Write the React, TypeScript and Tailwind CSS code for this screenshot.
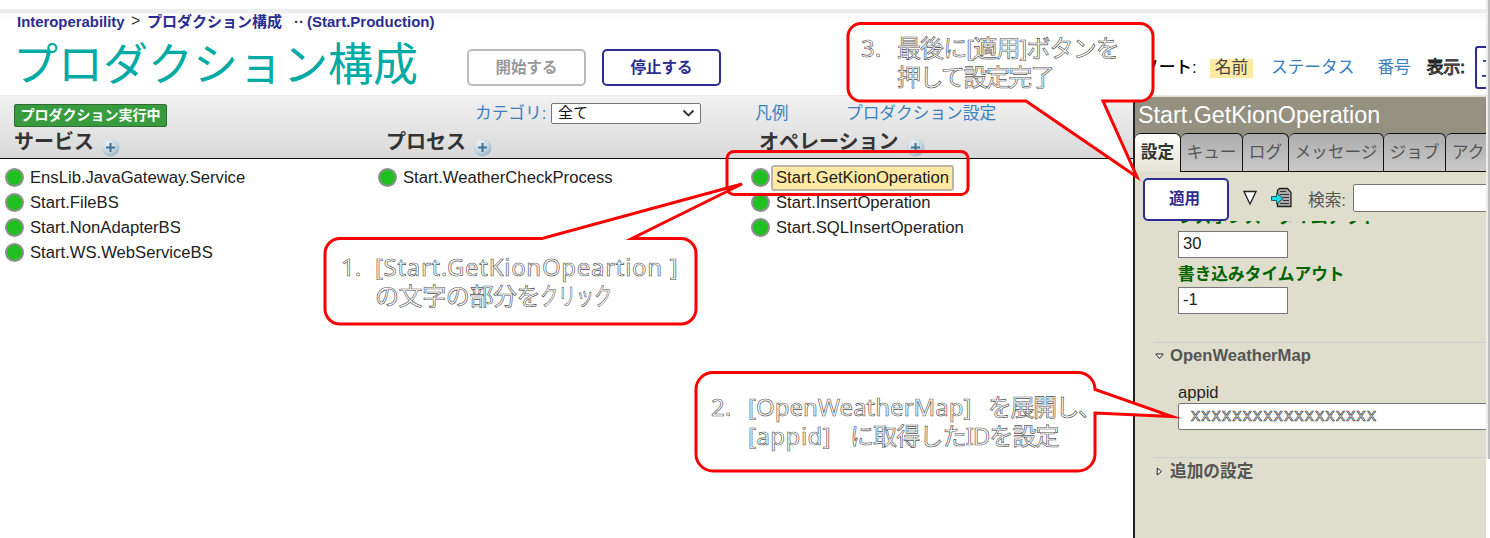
import type { ReactNode } from "react";

const services = ["EnsLib.JavaGateway.Service", "Start.FileBS", "Start.NonAdapterBS", "Start.WS.WebServiceBS"];
const processes = ["Start.WeatherCheckProcess"];
const operations = ["Start.GetKionOperation", "Start.InsertOperation", "Start.SQLInsertOperation"];

function AddIcon() {
  return (
    <svg width="19" height="19" viewBox="0 0 19 19" className="mt-[11px] shrink-0">
      <defs>
        <radialGradient id="orb" cx="35%" cy="25%" r="80%">
          <stop offset="0" stopColor="#e9eef1" />
          <stop offset="0.6" stopColor="#c6d7e0" />
          <stop offset="1" stopColor="#94b4c5" />
        </radialGradient>
      </defs>
      <circle cx="9.5" cy="9.5" r="9" fill="url(#orb)" />
      <path d="M9.5 5v9M5 9.5h9" stroke="#3f7297" strokeWidth="2" />
    </svg>
  );
}

function Heading({ children, className }: { children: ReactNode; className: string }) {
  return (
    <div className={`flex h-[30px] ${className}`}>
      <span className="text-[20px] leading-[31px] font-bold whitespace-nowrap text-[#333]">{children}</span>
      <span className="ml-[7px]"><AddIcon /></span>
    </div>
  );
}

function Items({ items, selected, className }: { items: string[]; selected?: string; className: string }) {
  return (
    <ul className={`pt-[6px] ${className}`}>
      {items.map((name) => (
        <li key={name} className="flex h-[25px] items-center pl-[5px]">
          <span className="size-[19px] shrink-0 rounded-full border-2 border-[#8d918d] bg-[#21c021]" />
          <span
            className={
              name === selected
                ? "ml-px flex h-[26px] items-center rounded-[3px] border-2 border-[#b9b6a5] bg-[#ffe9a3] pt-[2px] pr-[3px] pl-[3px] text-[16.65px] whitespace-nowrap text-[#222]"
                : "mt-[2px] ml-[6px] text-[16.65px] whitespace-nowrap text-[#222]"
            }
          >
            {name}
          </span>
        </li>
      ))}
    </ul>
  );
}

function Tab({ label, className }: { label: string; className: string }) {
  return (
    <div
      className={`flex h-[39px] shrink-0 items-center justify-center overflow-hidden rounded-t-[6px] border border-l-0 border-[#111] bg-linear-to-b from-[#adadad] to-[#c9c9c9] text-[16.7px] whitespace-nowrap text-[#555] ${className}`}
    >
      {label}
    </div>
  );
}

const note =
  "absolute z-20 whitespace-pre text-white text-[24px] leading-[29px] [-webkit-text-stroke:0.65px_#555] [font-family:'Noto_Sans','Noto_Sans_CJK_JP',sans-serif]";

export default function App() {
  return (
    <div className="relative flex h-[538px] w-[1490px] overflow-hidden bg-white [font-family:'Liberation_Sans','Noto_Sans_CJK_JP',sans-serif]">
      <div className="flex w-[1486px] shrink-0 flex-col overflow-hidden">
        <div className="mt-[9px] h-[4px] shrink-0 bg-[#ededed]" />
        <header className="h-[83px] shrink-0 border-b border-[#e8e8e8] bg-linear-to-b from-[#f7f7f7] to-white to-[8px]">
          <nav className="flex h-[18px] items-center pl-[17px] text-[15px] font-bold whitespace-nowrap text-[#2c2c92]">
            <span className="w-[107px] text-[14.9px]">Interoperability</span>
            <span className="-mt-[3px] ml-[7px] w-[16px] text-[16px] font-normal text-[#333]">&gt;</span>
            <span className="w-[147px]">プロダクション構成</span>
            <span className="w-[12px] text-[#333]">··</span>
            <span className="ml-px text-[15px]">(Start.Production)</span>
          </nav>
          <div className="flex pl-[13px]">
            <h1 className="h-[64px] w-[454px] shrink-0 text-[45px] leading-[69px] whitespace-nowrap text-[#00aaa5]">プロダクション構成</h1>
            <button className="mt-[18px] flex h-[37px] w-[119px] shrink-0 items-center justify-center rounded-[5px] border-2 border-[#bbb] text-[15.5px] font-bold text-[#999]">開始する</button>
            <button className="mt-[18px] ml-[16px] flex h-[37px] w-[119px] shrink-0 items-center justify-center rounded-[5px] border-2 border-[#2c2c92] text-[15.5px] font-bold text-[#2c2c92]">停止する</button>
            <div className="mt-[25px] ml-[421px] flex h-[24px] shrink-0 items-center text-[16.7px] whitespace-nowrap">
              <span className="w-[68px] font-medium text-black">ソート:</span>
              <span className="flex h-[19px] w-[43px] items-center justify-center bg-[#ffe9a3] text-[#444]">名前</span>
              <span className="ml-[18px] text-[#3a80bd]">ステータス</span>
              <span className="ml-[23px] text-[#3a80bd]">番号</span>
              <span className="ml-[16px] text-white [-webkit-text-stroke:1px_#222]">表示:</span>
            </div>
            <div className="mt-[15px] ml-[10px] h-[43px] w-[40px] shrink-0 rounded-[3px] border-2 border-[#2c2c92] pt-[4px] pl-[4px] text-[22px] text-[#2c2c92]">工</div>
          </div>
        </header>
        <div className="flex h-[442px]">
          <main className="w-[1133px] shrink-0">
            <div className="h-[63px] border-b border-[#111] bg-linear-to-b from-[#f1f1f1] to-[#d9d9d9]">
              <div className="flex h-[31px] items-start text-[16.7px] whitespace-nowrap text-[#3a80bd]">
                <div className="mt-[8px] ml-[14px] flex h-[23px] w-[153px] items-center justify-center rounded-[2px] border border-[#2f6b32] bg-[#389c3e] text-[14px] font-bold text-white">プロダクション実行中</div>
                <span className="mt-[5px] ml-[308px] w-[76px]">カテゴリ:</span>
                <div className="mt-[7px] flex h-[21px] w-[150px] items-center justify-between rounded-[2px] border border-[#777] bg-white pr-[5px] pl-[6px] text-[15px] text-[#111]">
                  全て
                  <svg width="13" height="9" viewBox="0 0 13 9" fill="none" stroke="#333" strokeWidth="1.8"><path d="M1.5 1.5l5 5 5-5" /></svg>
                </div>
                <span className="mt-[5px] ml-[54px] w-[91px]">凡例</span>
                <span className="mt-[5px]">プロダクション設定</span>
              </div>
              <div className="flex pl-[14px]">
                <Heading className="w-[372px]">サービス</Heading>
                <Heading className="w-[373px]">プロセス</Heading>
                <Heading className="w-[300px]">オペレーション</Heading>
              </div>
            </div>
            <div className="flex">
              <Items items={services} className="w-[373px]" />
              <Items items={processes} className="w-[373px]" />
              <Items items={operations} selected="Start.GetKionOperation" className="w-[300px]" />
            </div>
          </main>
          <aside className="flex w-[353px] shrink-0 flex-col overflow-hidden border-l-2 border-[#222] bg-[#dfdecd]">
            <div className="mt-px h-[36px] shrink-0 bg-[#949181] pl-[3px] text-[23.3px] leading-[37px] whitespace-nowrap text-white">Start.GetKionOperation</div>
            <div className="flex shrink-0 bg-[#949181]">
              <div className="flex h-[39px] w-[46px] shrink-0 items-center justify-center rounded-t-[6px] border-t border-r border-[#111] bg-linear-to-b from-white to-[#e4e3d3] text-[16.7px] font-bold text-[#333]">設定</div>
              <Tab label="キュー" className="w-[62px]" />
              <Tab label="ログ" className="w-[46px]" />
              <Tab label="メッセージ" className="w-[95px]" />
              <Tab label="ジョブ" className="w-[62px]" />
              <Tab label="アク" className="w-[60px] justify-start pl-[6px]" />
            </div>
            <div className="flex h-[49px] shrink-0 pl-[8px]">
              <button className="mt-[6px] flex h-[43px] w-[86px] shrink-0 items-center justify-center rounded-[5px] border-2 border-[#2c2c92] bg-white pr-[3px] pb-[2px] text-[15.5px] font-bold text-[#2c2c92]">適用</button>
              <svg className="mt-[18px] ml-[14px] shrink-0" width="14" height="16" viewBox="0 0 14 16"><path d="M1 1.5h12L7 14z" fill="white" stroke="#222" strokeWidth="1.3" /></svg>
              <svg className="mt-[15px] ml-[14px] shrink-0" width="21" height="21" viewBox="0 0 21 21">
                <path d="M6.500 3.500l2-2h8l3.500 4v14H6.500z" fill="#aaa" stroke="#222" strokeWidth="1.3" />
                <path d="M9 4.500h6M9 7.500h9M12 10.500h6M12 13.500h6M9 16.500h9" stroke="#333" strokeWidth="1" />
                <path d="M.5 9.500h5V6l6.500 5.500L5.500 17v-3.500h-5z" fill="#16dce8" stroke="#234" strokeWidth="0.8" />
              </svg>
              <span className="mt-[16px] ml-[16px] w-[45px] shrink-0 text-[16.7px] whitespace-nowrap text-[#555]">検索:</span>
              <div className="mt-[12px] h-[28px] w-[150px] shrink-0 rounded-[2px] border border-[#777] bg-white" />
            </div>
            <div className="min-h-0 flex-1 overflow-hidden pl-[43px] text-[16.6px] text-[#222]">
              <div className="h-[10px] overflow-hidden">
                <div className="-mt-[15px] text-[16.7px] leading-[24px] font-bold whitespace-nowrap text-[#006400]">レスポンス・タイムアウト</div>
              </div>
              <div className="flex h-[27px] w-[110px] items-center border border-[#777] bg-white pl-[4px]">30</div>
              <div className="h-[29px] text-[16.7px] leading-[33px] font-bold whitespace-nowrap text-[#006400]">書き込みタイムアウト</div>
              <div className="flex h-[27px] w-[110px] items-center border border-[#777] bg-white pl-[4px]">-1</div>
              <div className="mt-[28px] -ml-[25px] h-[115px] border-t border-[#cbd0cd]">
                <div className="flex h-[27px] items-center pl-[2px] font-bold text-[#555]">
                  <svg className="mr-[6px]" width="9" height="7" viewBox="0 0 9 7"><path d="M.8 1h7.4L4.5 5.5z" fill="white" stroke="#222" /></svg>
                  OpenWeatherMap
                </div>
                <div className="pl-[25px]">
                  <div className="mt-[10px] h-[22px] leading-[25px]">appid</div>
                  <div className="mt-px flex h-[27px] w-[340px] items-center rounded-[2px] border border-[#777] bg-white pb-[2px] pl-[12px] text-[18px] tracking-[1.35px] text-white [-webkit-text-stroke:0.65px_#333]">xxxxxxxxxxxxxxxxxx</div>
                </div>
              </div>
              <div className="-ml-[25px] border-t border-[#cbd0cd]">
                <div className="flex h-[27px] items-center pl-[2px] text-[16.7px] font-bold text-[#555]">
                  <svg className="mr-[6px]" width="9" height="9" viewBox="0 0 9 9"><path d="M2.2 1v7L6.5 4.5z" fill="white" stroke="#222" /></svg>
                  追加の設定
                </div>
              </div>
            </div>
          </aside>
        </div>
      </div>
      <div className="h-[459px] w-[4px] border-l-2 border-l-[#ececec] bg-[#bdbdbd]" />

      <svg className="absolute inset-0 z-10" width="1490" height="538" viewBox="0 0 1490 538" fill="white" stroke="#fb0000" strokeWidth="3" strokeMiterlimit="10">
        <rect x="727" y="151.5" width="241" height="43" rx="7" fill="none" />
        <path d="M340 238.500H542L742 184 632 238.500H681a15 15 0 0 1 15 15V309a15 15 0 0 1-15 15H340a15 15 0 0 1-15-15V253.500a15 15 0 0 1 15-15z" />
        <path d="M713 372.500H1078a17 17 0 0 1 17 17L1172 416.500 1095 413V454a17 17 0 0 1-17 17H713a17 17 0 0 1-17-17V389.500a17 17 0 0 1 17-17z" />
        <path d="M861 23.500H1140a13 13 0 0 1 13 13V88a13 13 0 0 1-13 13H1103L1137 177 1026 101H861a13 13 0 0 1-13-13V36.500a13 13 0 0 1 13-13z" />
      </svg>
      <div className={`${note} top-[252px] left-[341px]`}>1.</div>
      <div className={`${note} top-[252px] left-[375px]`}>
        <div className="tracking-[0.7px]">[Start.GetKionOpeartion ]</div>
        <div className="flex">
          <span className="w-[165px] tracking-[-0.4px]">の文字の部分を</span>
          <span className="w-[74px] origin-left scale-x-75">クリック</span>
        </div>
      </div>
      <div className={`${note} top-[392px] left-[711px]`}>2.</div>
      <div className={`${note} top-[392px] left-[748px]`}>
        <div className="flex">
          <span className="w-[240px]">[OpenWeatherMap]</span>
          <span className="tracking-[-1.5px]">を展開し、</span>
        </div>
        <div className="flex">
          <span className="w-[102px] tracking-[0.5px]">[appid]</span>
          <span className="tracking-[-0.9px]">に取得したIDを設定</span>
        </div>
      </div>
      <div className={`${note} top-[33px] left-[861px]`}>3.</div>
      <div className={`${note} top-[33px] left-[897px]`}>
        <div className="tracking-[-0.9px]">最後に[適用]ボタンを</div>
        <div className="tracking-[-1.6px]">押して設定完了</div>
      </div>
    </div>
  );
}
